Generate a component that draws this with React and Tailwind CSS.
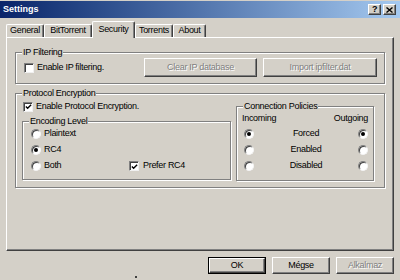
const raised =
  'border border-t-white border-l-white border-r-[#404040] border-b-[#404040] shadow-[inset_-1px_-1px_0_#808080]'
const etched =
  'relative border border-[#808080] shadow-[inset_1px_1px_0_white,1px_1px_0_white]'
const disabledText = 'text-[#808080] [text-shadow:1px_1px_0_white]'

function Group({ label, className = '', children }) {
  return (
    <div className={`${etched} ${className}`}>
      <span className="absolute -top-[6px] left-[6px] px-[1px] bg-[#d4d0c8] leading-[11px]">
        {label}
      </span>
      {children}
    </div>
  )
}

function CheckBox({ checked }) {
  return (
    <span className="flex items-center justify-center w-[10px] h-[10px] shrink-0 bg-white border border-[#808080] border-r-[#f0f0f0] border-b-[#f0f0f0] shadow-[inset_1px_1px_0_#404040]">
      {checked && (
        <svg width="8" height="8" viewBox="0 0 8 8" className="ml-[1px] mt-[1px]">
          <path d="M1 3.5 L3 5.5 L7 1.5" stroke="black" strokeWidth="1.6" fill="none" />
        </svg>
      )}
    </span>
  )
}

function Radio({ checked }) {
  return (
    <span className="flex items-center justify-center w-[10px] h-[10px] shrink-0 rounded-full bg-white border border-[#808080] border-r-[#f4f4f4] border-b-[#f4f4f4] shadow-[inset_1px_1px_0_#404040]">
      {checked && <span className="w-[4px] h-[4px] rounded-full bg-black" />}
    </span>
  )
}

function Button({ children, className = '', disabled, isDefault }) {
  const face = (
    <div className={`flex items-center justify-center h-full bg-[#d4d0c8] ${raised} ${disabled ? disabledText : 'text-black'}`}>
      {children}
    </div>
  )
  if (isDefault) {
    return <div className={`border border-black ${className}`}>{face}</div>
  }
  return <div className={className}>{face}</div>
}

const TABS = [
  { label: 'General', w: 'w-[38px]' },
  { label: 'BitTorrent', w: 'w-[48px]' },
  { label: 'Security', w: 'w-[43px]', active: true },
  { label: 'Torrents', w: 'w-[38px]' },
  { label: 'About', w: 'w-[33px]' },
]

const POLICIES = [
  { label: 'Forced', checked: true },
  { label: 'Enabled' },
  { label: 'Disabled' },
]

export default function App() {
  return (
    <div className="relative w-[400px] h-[280px] bg-[#d4d0c8] overflow-hidden font-['Liberation_Sans',Arial,sans-serif] text-[9px] tracking-[-0.3px] text-black">
      {/* title bar */}
      <div className="mt-[1px] h-[17px] flex items-center pl-[3px] pr-[4px] bg-gradient-to-r from-[#0a246a] to-[#a6caf0]">
        <span className="text-white font-bold tracking-normal">Settings</span>
        <div className="ml-auto flex gap-[2px]">
          <div className={`w-[13px] h-[11px] bg-[#d4d0c8] ${raised} flex items-center justify-center font-bold text-[9px] leading-none`}>
            ?
          </div>
          <div className={`w-[13px] h-[11px] bg-[#d4d0c8] ${raised} flex items-center justify-center`}>
            <svg width="7" height="6" viewBox="0 0 7 6">
              <path d="M0.5 0.5 L6.5 5.5 M6.5 0.5 L0.5 5.5" stroke="black" strokeWidth="1.4" />
            </svg>
          </div>
        </div>
      </div>

      {/* tabs */}
      <div className="mt-[3px] ml-[6px] h-[16px] flex items-end">
        {TABS.map(({ label, w, active }) => (
          <div
            key={label}
            className={`${w} flex items-center justify-center bg-[#d4d0c8] rounded-t-[2px] border-t border-l border-r border-t-white border-l-white border-r-[#404040] shadow-[inset_-1px_0_0_#808080] ${
              active ? 'relative z-10 h-[17px] -mb-px' : 'h-[13px]'
            }`}
          >
            {label}
          </div>
        ))}
      </div>

      {/* tab panel */}
      <div className={`ml-[6px] w-[388px] h-[214px] ${raised}`}>
        <Group label="IP Filtering" className="mt-[14px] mx-[8px] h-[32px]">
          <div className="flex items-center pt-[5px] pl-[8px] pr-[7px]">
            <CheckBox />
            <span className="ml-[3px]">Enable IP filtering.</span>
            <div className="ml-auto flex gap-[6px]">
              <Button disabled className="w-[113px] h-[19px]">Clear IP database</Button>
              <Button disabled className="w-[114px] h-[19px]">Import ipfilter.dat</Button>
            </div>
          </div>
        </Group>

        <Group label="Protocol Encryption" className="mt-[9px] mx-[8px] h-[95px]">
          <div className="flex items-start pt-[7px] pl-[6px]">
            <div className="w-[209px]">
              <div className="h-[11px] flex items-center pl-[1px]">
                <CheckBox checked />
                <span className="ml-[3px]">Enable Protocol Encryption.</span>
              </div>
              <Group label="Encoding Level" className="mt-[9px] h-[59px]">
                <div className="pt-[4px] pl-[8px]">
                  <div className="h-[16px] flex items-center">
                    <Radio />
                    <span className="ml-[3px]">Plaintext</span>
                  </div>
                  <div className="h-[16px] flex items-center">
                    <Radio checked />
                    <span className="ml-[3px]">RC4</span>
                  </div>
                  <div className="h-[16px] flex items-center">
                    <Radio />
                    <span className="ml-[3px] w-[85px]">Both</span>
                    <CheckBox checked />
                    <span className="ml-[4px]">Prefer RC4</span>
                  </div>
                </div>
              </Group>
            </div>

            <Group label="Connection Policies" className="ml-[5px] mt-[5px] w-[138px] h-[75px]">
              <div className="pt-[6px] px-[5px] h-[17px] flex items-center justify-between">
                <span>Incoming</span>
                <span>Outgoing</span>
              </div>
              <div className="mt-[2px] pl-[7px] pr-[5px]">
                {POLICIES.map(({ label, checked }) => (
                  <div key={label} className="h-[16px] flex items-center">
                    <Radio checked={checked} />
                    <span className="flex-1 text-center">{label}</span>
                    <Radio checked={checked} />
                  </div>
                ))}
              </div>
            </Group>
          </div>
        </Group>
      </div>

      {/* dialog buttons */}
      <div className="mt-[6px] pr-[6px] flex justify-end gap-[6px]">
        <Button isDefault className="w-[58px] h-[17px]">OK</Button>
        <Button className="w-[58px] h-[17px]">Mégse</Button>
        <Button disabled className="w-[58px] h-[17px]">Alkalmaz</Button>
      </div>

      {/* stray cursor pixel */}
      <span className="absolute left-[135px] top-[276px] w-[2px] h-[2px] bg-[#404040]" />
    </div>
  )
}
